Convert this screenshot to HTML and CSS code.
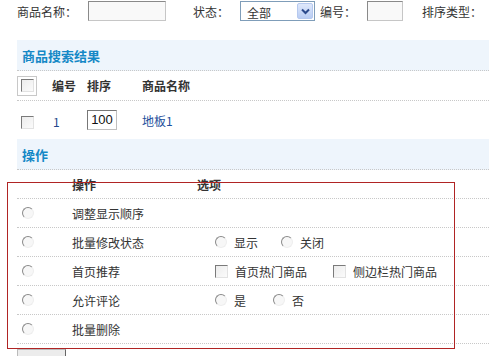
FILE: index.html
```html
<!Doctype html>
<html>
<head>
<title>商品管理</title>
<link rel="stylesheet" href="styles.css">
</head>
<body>
<div class="page">
	<!-- search bar -->
	<div class="search-bar">
		<span class="lbl">商品名称：</span>
		<span class="txt txt-name"></span>
		<span class="lbl lbl-state">状态：</span>
		<div class="sel">
			<span class="sel-val">全部</span>
			<span class="sel-btn">
				<svg width="9" height="7" viewBox="0 0 9 7"><path d="M1 1.5 L4.5 5 L8 1.5" fill="none" stroke="#2b4a8c" stroke-width="2"/></svg>
			</span>
		</div>
		<span class="lbl lbl-no">编号：</span>
		<span class="txt txt-no"></span>
		<span class="lbl lbl-sort">排序类型：</span>
	</div>

	<div class="band"><span class="band-title">商品搜索结果</span></div>

	<div class="res-row res-head">
		<div class="c1"><span class="chk-wrap"><span class="chk"></span></span></div>
		<div class="c2">编号</div>
		<div class="c3">排序</div>
		<div class="c4">商品名称</div>
	</div>
	<div class="res-row res-data">
		<div class="c1"><span class="chk"></span></div>
		<div class="c2 num">1</div>
		<div class="c3"><span class="txt txt-sort">100</span></div>
		<div class="c4"><a href="#" class="link">地板1</a></div>
	</div>

	<div class="band band-op"><span class="band-title">操作</span></div>

	<div class="op-row op-head">
		<div class="o1"></div>
		<div class="o2">操作</div>
		<div class="o3">选项</div>
	</div>
	<div class="op-row">
		<div class="o1"><span class="radio"></span></div>
		<div class="o2">调整显示顺序</div>
		<div class="o3"></div>
	</div>
	<div class="op-row">
		<div class="o1"><span class="radio"></span></div>
		<div class="o2">批量修改状态</div>
		<div class="o3">
			<span class="radio"></span><span class="opt">显示</span>
			<span class="radio gap-show"></span><span class="opt">关闭</span>
		</div>
	</div>
	<div class="op-row">
		<div class="o1"><span class="radio"></span></div>
		<div class="o2">首页推荐</div>
		<div class="o3">
			<span class="chk"></span><span class="opt">首页热门商品</span>
			<span class="chk gap-hot"></span><span class="opt">侧边栏热门商品</span>
		</div>
	</div>
	<div class="op-row">
		<div class="o1"><span class="radio"></span></div>
		<div class="o2">允许评论</div>
		<div class="o3">
			<span class="radio"></span><span class="opt">是</span>
			<span class="radio gap-yes"></span><span class="opt">否</span>
		</div>
	</div>
	<div class="op-row">
		<div class="o1"><span class="radio"></span></div>
		<div class="o2">批量删除</div>
		<div class="o3"></div>
	</div>

	<button class="bttn" type="button" aria-label="执行"></button>
</div>

<!-- highlight frame -->
<div class="mark"></div>
</body>
</html>
```

FILE: styles.css
```css
body{margin:0;overflow:hidden;background:#fff;font-family:"Noto Sans CJK SC","Liberation Sans",sans-serif;font-size:12px;color:#333;}
.page{padding-left:17px;}

.search-bar{display:flex;align-items:center;height:22px;}
.lbl{white-space:nowrap;}
.txt{display:inline-block;box-sizing:border-box;height:20px;border:1px solid #c6c6c6;border-top-color:#8a8a8a;border-left-color:#8a8a8a;background:#f9f9f9;}
.txt-name{width:78px;margin-left:11px;}
.lbl-state{margin-left:27px;}
.sel{display:flex;align-items:center;justify-content:space-between;box-sizing:border-box;width:75px;height:20px;margin-left:11px;border:1px solid #7f9db9;background:#fff;}
.sel-val{padding-left:6px;padding-top:2px;}
.sel-btn{display:flex;align-items:center;justify-content:center;width:16px;height:16px;margin-right:1px;border:1px solid #b6c9ef;border-radius:2px;background:linear-gradient(#dfe8fb,#b9cdf4);box-sizing:border-box;}
.lbl-no{margin-left:5px;}
.txt-no{width:36px;margin-left:11px;}
.lbl-sort{margin-left:19px;}

.band{height:30px;margin-top:18px;display:flex;align-items:center;background:#eef5fc;border-bottom:1px dotted #c8c8c8;}
.band-op{margin-top:0;}
.band-title{padding-left:5px;font-size:13px;font-weight:bold;color:#1588c6;}

.res-row{display:grid;grid-template-columns:35px 35px 55px 1fr;align-items:center;}
.res-head{height:29px;border-bottom:1px dotted #c8c8c8;font-weight:bold;}
.res-data{height:38px;}
.res-data .c1{padding-left:4px;}
.num{color:#23468a;padding-left:1px;padding-top:3px;}
.txt-sort{width:30px;text-align:center;line-height:18px;font-family:"Liberation Sans",sans-serif;font-size:13px;color:#111;border-color:#bfbfbf;border-top-color:#777;border-left-color:#777;background:#fff;}
.link{color:#1e4f9c;text-decoration:none;}

.chk-wrap{display:flex;align-items:center;justify-content:center;box-sizing:border-box;width:20px;height:20px;border:1px solid #c8c8c8;}
.chk{display:inline-block;box-sizing:border-box;width:13px;height:13px;border:1px solid #e2e2e2;border-top-color:#7a7a7a;border-left-color:#7a7a7a;background:linear-gradient(135deg,#ececec,#fbfbfb);vertical-align:middle;}
.radio{display:inline-block;box-sizing:border-box;width:12px;height:12px;border-radius:50%;border:1px solid #eee;border-top-color:#8a8a8a;border-left-color:#8a8a8a;background:#f7f7f7;vertical-align:middle;}

.op-row{display:grid;grid-template-columns:55px 125px 1fr;align-items:center;height:28px;border-bottom:1px dotted #c8c8c8;}
.op-head{font-weight:bold;}
.o1{padding-left:5px;display:flex;align-items:center;}
.o3{padding-left:18px;display:flex;align-items:center;}
.op-head .o3{padding-left:0;}
.opt{margin-left:7px;}
.gap-show{margin-left:23px;}
.gap-hot{margin-left:26px;}
.gap-yes{margin-left:27px;}

.bttn{display:block;margin-top:5px;width:49px;height:22px;border:1px solid #bbb;border-right-color:#666;background:#ececec;}

.mark{position:absolute;left:7px;top:182px;width:448px;height:167px;box-sizing:border-box;border:1px solid #b02424;}
```
